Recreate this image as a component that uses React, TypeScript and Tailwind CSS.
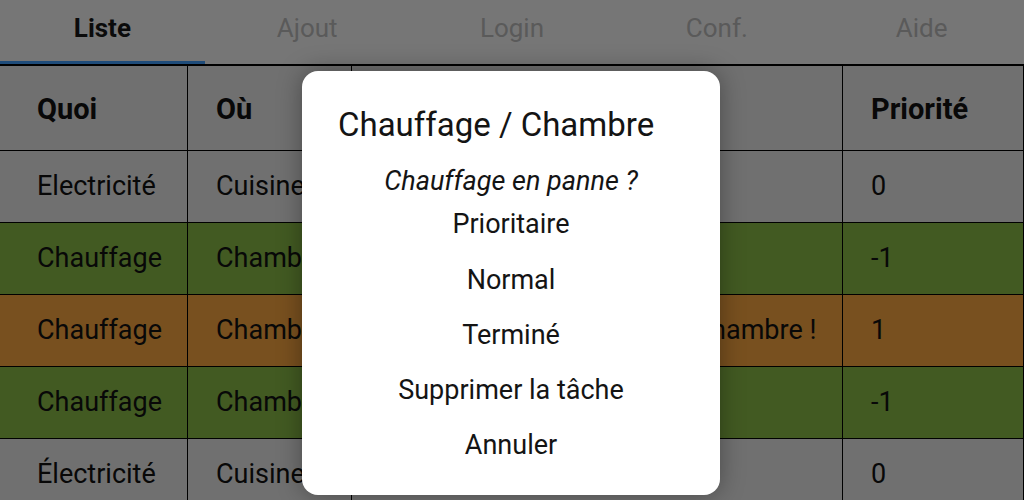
import React from "react";

type Row = {
  quoi: string;
  ou: string;
  desc: string;
  prio: string;
  tone: "grey" | "green" | "orange";
};

const TABS = ["Liste", "Ajout", "Login", "Conf.", "Aide"];

const ROWS: Row[] = [
  { quoi: "Electricité", ou: "Cuisine", desc: "Prise grillée", prio: "0", tone: "grey" },
  { quoi: "Chauffage", ou: "Chambre", desc: "Radiateur froid", prio: "-1", tone: "green" },
  { quoi: "Chauffage", ou: "Chambre", desc: "Plus de chauffage dans la chambre !", prio: "1", tone: "orange" },
  { quoi: "Chauffage", ou: "Chambre", desc: "Chauffage en panne ?", prio: "-1", tone: "green" },
  { quoi: "Électricité", ou: "Cuisine", desc: "Ampoule", prio: "0", tone: "grey" },
];

const toneBg: Record<Row["tone"], string> = {
  grey: "bg-[#707070]",
  green: "bg-[#425a22]",
  orange: "bg-[#78501f]",
};

const ACTIONS = ["Prioritaire", "Normal", "Terminé", "Supprimer la tâche", "Annuler"];

export default function App() {
  return (
    <div
      className="relative h-[500px] w-[1024px] overflow-hidden bg-[#707070] text-[#080808]"
      style={{ fontFamily: "Roboto, 'Liberation Sans', sans-serif" }}
    >
      {/* Tabs */}
      <div className="flex h-[66px] bg-[#767676] border-b-2 border-black">
        {TABS.map((t, i) => (
          <div
            key={t}
            className={`flex-1 flex items-center justify-center pb-[5px] text-[26px] ${
              i === 0
                ? "font-bold text-[#0b0b0b] border-b-[3px] border-[#1f4c7a]"
                : "text-[#5a5a5a] border-b-[3px] border-transparent"
            }`}
          >
            {t}
          </div>
        ))}
      </div>

      {/* Table */}
      <div className="grid grid-cols-[188px_164px_491px_181px]">
        {["Quoi", "Où", "Description", "Priorité"].map((h, i) => (
          <div
            key={h}
            className={`h-[85px] pt-[3px] flex items-center border-r border-b border-black font-bold text-[29px] ${
              i === 0 ? "pl-[37px]" : "pl-[28px]"
            }`}
          >
            {h}
          </div>
        ))}
        {ROWS.map((r, idx) => (
          <React.Fragment key={idx}>
            {[r.quoi, r.ou, r.desc, r.prio].map((v, j) => (
              <div
                key={j}
                className={`h-[72px] flex items-center border-r border-b border-black whitespace-nowrap overflow-hidden text-[27px] ${
                  toneBg[r.tone]
                } ${j === 0 ? "pl-[37px]" : "pl-[28px]"}`}
              >
                {v}
              </div>
            ))}
          </React.Fragment>
        ))}
      </div>

      {/* Dialog */}
      <div className="absolute left-[302px] top-[71px] w-[418px] h-[424px] rounded-[16px] bg-white shadow-[0_0_24px_rgba(0,0,0,0.35)] pt-[34px] text-[#141414]">
        <div className="pl-[36px] h-[40px] leading-[40px] text-[33px]">Chauffage / Chambre</div>
        <div className="mt-[20px] h-[32px] leading-[32px] text-center italic text-[27px]">
          Chauffage en panne ?
        </div>
        <div className="flex flex-col">
          {ACTIONS.map((a) => (
            <div key={a} className="h-[55.25px] flex items-center justify-center text-[27px]">
              {a}
            </div>
          ))}
        </div>
      </div>
    </div>
  );
}
